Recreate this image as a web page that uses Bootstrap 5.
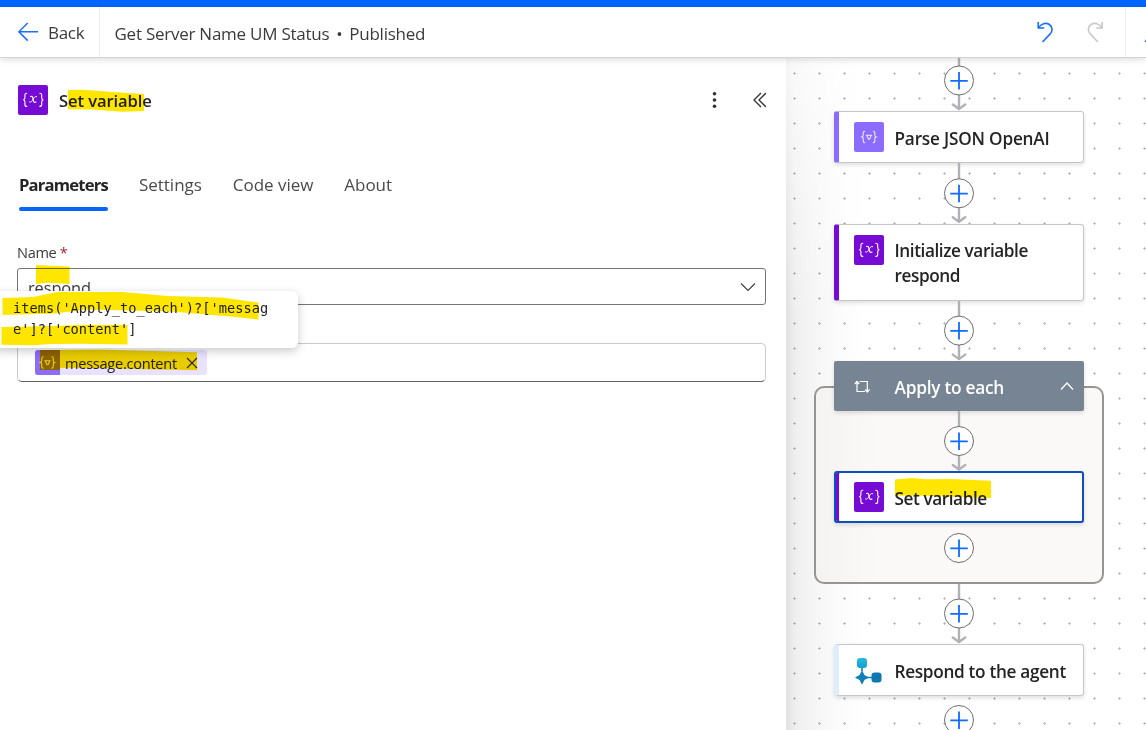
<!DOCTYPE html>
<html lang="en">
<head>
<meta charset="utf-8">
<title>Get Server Name UM Status</title>
<link href="https://cdn.jsdelivr.net/npm/bootstrap@5.3.0/dist/css/bootstrap.min.css" rel="stylesheet">
<style>
:root{--blue:#0066ff;--ink:#242424;--violet:#770bd6;--lilac:#8c6cff}
body{font-family:"Open Sans","Noto Sans",sans-serif;color:var(--ink);height:730px;overflow:hidden;background:#fff;line-height:1.36}
svg{display:block;flex:none}
.accent{height:7px;background:var(--blue)}
.topbar{height:51px;border-bottom:1px solid #d4d4d4;box-shadow:0 2px 6px rgba(0,0,0,.13);z-index:5;color:#3b3a39;font-size:17px}
.back{width:100px;border-right:1px solid #ededed;padding-left:18px;gap:10px}
.back span{font-size:17px;letter-spacing:-.3px;padding-top:1px}
.flowname{padding:3px 0 0 14.5px;font-size:17px;letter-spacing:-.25px}
.flowname i{font-style:normal;width:20px;text-align:center}
.tools{width:21px;border-left:1px solid #ededed}
.panel{width:786px;z-index:2}
.panel-head{padding:27px 20px 0 18px;gap:11px}
.panel-head h1{font-size:16.6px;font-weight:600;margin:0;padding-top:2px;letter-spacing:-.1px}
.tile{width:30px;height:30px;border-radius:2px;background:var(--violet);flex:none}
.tile.json{background:var(--lilac)}
.tabs{padding:58px 0 0 19px;gap:31px;font-size:17px;letter-spacing:-.03px;color:#4a4a4a}
.tabs a{color:inherit;text-decoration:none;height:38px;white-space:nowrap;position:relative}
.tabs .on{font-weight:700;color:var(--ink);font-size:16.6px;line-height:23.5px;letter-spacing:-.8px;width:89px}
.tabs .on::after{content:"";position:absolute;left:0;right:0;bottom:0;height:4px;border-radius:2px;background:var(--blue)}
.form-area{padding:32px 20px 0 17px}
.lbl{font-size:14.6px;height:25px;color:#3b3a39;letter-spacing:-.35px}
.lbl b{color:#a4262c;font-weight:400}
.pick{height:37px;border:1px solid #757575;border-radius:3px;padding:0 9px 0 10px;font-size:16.4px;color:#3b3a39;letter-spacing:-.1px}
.pick span{padding-top:4px}
.expr{height:39px;margin-top:38px;border:1px solid #c9c9c9;border-bottom-color:#616161;border-radius:5px;padding-left:17px}
.token{height:25px;width:172px;background:#e8e2ff;border-radius:3px;overflow:hidden;font-size:14.6px;letter-spacing:-.27px}
.token i{width:25px;height:25px;background:var(--lilac)}
.tip{left:-8px;top:233px;width:306px;height:57px;background:#fff;border-radius:6px;box-shadow:0 3px 10px rgba(0,0,0,.22);padding:7px 0 0 21px;font:13.68px/21px "DejaVu Sans Mono",monospace;white-space:pre}
.marker{left:0;top:0;mix-blend-mode:multiply;pointer-events:none;fill:#ffe600}
.canvas{overflow:hidden;background:radial-gradient(circle at 12.5px 12.5px,#b4b4b8 0,#b4b4b8 .9px,transparent 1.3px) -4px 3px/25px 25px,#fff;padding-left:28px}
.canvas::before{content:"";position:absolute;left:0;top:0;width:80px;bottom:0;background:linear-gradient(90deg,rgba(0,0,0,.12) 0,rgba(0,0,0,.065) 8px,rgba(0,0,0,.045) 24px,rgba(0,0,0,.015) 50px,rgba(0,0,0,0) 80px);-webkit-mask-image:linear-gradient(180deg,rgba(0,0,0,.3) 0,#000 260px)}
.chain{width:290px;margin-top:-8px}
.step{width:250px;border:1px solid #c8c6c4;border-left:5px solid var(--c);border-radius:3px;background:#fff;box-shadow:0 2px 4px rgba(0,0,0,.13);gap:10.5px;padding:10px 0 0 15px;font-weight:600;font-size:17.2px;letter-spacing:-.3px;line-height:25px;height:52px;flex:none}
.step span{padding-top:4px;white-space:nowrap}
.step.wide-title{letter-spacing:-.2px}
.step.tall{height:77px;padding-top:10px}.step.tall span{padding-top:3px}
.step.tall,.step.sel{letter-spacing:-.42px}
.step.sel{border:2px solid #0f4fbd;box-shadow:inset 3px 0 var(--c),0 2px 4px rgba(0,0,0,.13);padding:9px 0 0 18px}
.loop{width:290px;height:223px;flex:none}
.loop::before{content:"";position:absolute;left:0;right:0;top:25px;bottom:0;border:2px solid #979593;border-radius:10px;background:linear-gradient(90deg,#f4f3f2,#faf9f8 60px)}
.loop>*{position:relative}
.loophead{width:250px;height:50px;background:#768494;color:#fff;border-radius:2px;font-weight:600;font-size:17.3px;letter-spacing:-.27px;padding:2px 10px 0 20px;box-shadow:0 2px 4px rgba(0,0,0,.13);flex:none}
</style>
</head>
<body class="d-flex flex-column">
<svg width="0" height="0" class="position-absolute"><defs>
<g id="plus"><circle cx="15" cy="15" r="14.5" fill="#fff" stroke="#6e6e6e"/><path d="M15 6.5v17.5M6.3 15.3h17.5" stroke="#0f6cff" stroke-width="1.8"/></g>
<g id="conn"><path d="M15 0v58M8.8 54l6.2 4.5 6.2-4.5" fill="none" stroke="#b0b0b7" stroke-width="2.4" stroke-linecap="round" stroke-linejoin="round"/><use href="#plus" y="15"/></g>
<g id="brx" fill="none" stroke="#fff" stroke-width="1.1" stroke-linecap="round"><path d="M8.8 8.3C7 8.3 6.9 9.1 6.900 10.300v2.500c0 1.200-.5 1.800-1.600 2 1.100.2 1.600.8 1.600 2v2.600c0 1.200.1 2 1.900 2M21.800 8.300c1.800 0 1.900.8 1.900 2v2.500c0 1.200.5 1.800 1.600 2-1.100.2-1.600.8-1.600 2v2.600c0 1.200-.1 2-1.900 2"/><path d="M12.600 11.500c1.500-.8 2 .3 2.500 2.900.5 2.500 1 3.600 2.900 2.600"/><path d="M18.700 11.600c-1.900-.7-2.600 1-3.600 2.700-1 1.800-1.700 3.400-3.600 2.700" stroke-width=".9"/></g>
<g id="brj" fill="none" stroke="#eee9ff" stroke-width="1.1" stroke-linecap="round"><path d="M10.700 9.300c-1.300 0-1.500.6-1.500 1.600v2.100c0 1-.3 1.600-1.200 1.900.9.2 1.200.8 1.200 1.900v2.100c0 1 .2 1.700 1.500 1.700M19.300 9.300c1.300 0 1.500.6 1.500 1.600v2.100c0 1 .3 1.600 1.200 1.900-.9.200-1.200.8-1.200 1.900v2.100c0 1-.2 1.700-1.500 1.700M12.300 13.300h5.400M12.800 13.500l1.700 3.700h1l1.700-3.700"/></g>
</defs></svg>
<div class="accent flex-shrink-0"></div>
<header class="topbar d-flex position-relative bg-white flex-shrink-0">
  <div class="back d-flex align-items-center"><svg width="20" height="20" fill="none" stroke="#1a6fff" stroke-width="1.5"><path d="M.8 9.800H20M9.700 1L.9 9.800l8.800 8.800"/></svg><span>Back</span></div>
  <div class="flowname d-flex align-items-center">Get Server Name UM Status<i>•</i>Published</div>
  <div class="d-flex ms-auto" style="padding-top:14.5px">
    <svg width="88" height="30" fill="none" stroke-width="1.6"><path d="M1.200 0v6h6M1.500 5.800C4 1.500 9 .2 12.400 2.500c3.300 2.300 3.400 6.500.8 9.400L5.500 20" stroke="#1a6fff"/><path d="M65.200 0v6h-6M64.900 5.800C62.500 1.500 57.500 .2 54 2.500c-3.300 2.300-3.400 6.500-.8 9.400l7.700 8.100" stroke="#c8c8c8"/></svg>
  </div>
  <div class="tools"><svg width="20" height="50"><path d="M18.500 35l2-4v4z" fill="#1a6fff"/></svg></div>
</header>
<div class="d-flex flex-grow-1" style="min-height:0">
  <main class="panel position-relative bg-white flex-shrink-0">
    <div class="panel-head d-flex align-items-center">
      <div class="tile"><svg width="30" height="30"><use href="#brx"/></svg></div>
      <h1>Set variable</h1>
      <svg class="ms-auto" width="56" height="20"><g fill="#323130"><circle cx="4.500" cy="3.800" r="1.800"/><circle cx="4.500" cy="10" r="1.800"/><circle cx="4.500" cy="16.200" r="1.800"/></g><path d="M51 3l-7 7 7 7M56 3l-7 7 7 7" fill="none" stroke="#323130" stroke-width="1.300"/></svg>
    </div>
    <nav class="tabs d-flex"><a class="on" href="#">Parameters</a><a href="#">Settings</a><a href="#">Code view</a><a href="#">About</a></nav>
    <div class="form-area">
      <div class="lbl">Name <b>*</b></div>
      <div class="pick d-flex align-items-center justify-content-between"><span>respond</span><svg width="16" height="10" fill="none" stroke="#424242" stroke-width="1.200"><path d="M1 1.500l7 7 7-7"/></svg></div>
      <div class="expr d-flex align-items-center"><div class="token d-flex align-items-center"><i><svg width="25" height="25"><use href="#brj" x="-2.500" y="-2.500"/></svg></i><span style="margin-left:5px;padding-top:2px">message.content</span><svg width="12" height="12" style="margin-left:9px" fill="none" stroke="#323130" stroke-width="1.200"><path d="M1 1l10 10M11 1L1 11"/></svg></div></div>
    </div>
    <div class="tip position-absolute">items('Apply_to_each')?['messag
e']?['content']</div>
    <svg class="marker position-absolute" width="786" height="340" viewBox="0 58 786 340">
      <path d="M68 90l15-.3 30 2.300 31 2v17l-22 .8-30-2.300-24-.3z"/>
      <path d="M36 265l15 .8 18.500.7v17.500l-22-1.200L36 284z"/>
      <path d="M2.500 298l30-1 25-5h65l45 4 55 1.500 36 5v17l-28-3-60-5-85-2-30 4-53 1.500z"/>
      <path d="M1.500 327l50-1 30-1h46v19.500l-50-.8-25 .3-20 1.200-31-.5z"/>
      <path d="M40 350l60-.5 97 2.800v18l-52-1-45-1.300-60-.2z"/>
      <path d="M40 350h20v20H40z"/>
    </svg>
  </main>
  <section class="canvas position-relative flex-grow-1">
    <div class="chain d-flex flex-column align-items-center position-relative">
      <svg width="30" height="61"><use href="#conn" y=".5"/></svg>
      <div class="step wide-title d-flex align-items-start" style="--c:#8c6cff"><div class="tile json"><svg width="30" height="30"><use href="#brj"/></svg></div><span>Parse JSON OpenAI</span></div>
      <svg width="30" height="61"><use href="#conn" y=".3"/></svg>
      <div class="step tall d-flex align-items-start" style="--c:#770bd6"><div class="tile"><svg width="30" height="30"><use href="#brx"/></svg></div><span>Initialize variable<br>respond</span></div>
      <svg width="30" height="60"><use href="#conn" y="-.4"/></svg>
      <div class="loop position-relative d-flex flex-column align-items-center">
        <div class="loophead d-flex align-items-center"><svg width="16" height="14" fill="none" stroke="#fff" stroke-width="1.200"><path d="M3 12V1.500M.8 4L3 1.500 5.200 4M5.500 1.500h7.800V12M11.100 9.500l2.200 2.500 2.200-2.500M3 11.500h8"/></svg><span style="margin-left:24.500px;padding-top:1.500px">Apply to each</span><svg class="ms-auto" width="14" height="10" fill="none" stroke="#fff" stroke-width="1.300"><path d="M1 7.500l6-6.500 6 6.500"/></svg></div>
        <svg width="30" height="60"><use href="#conn"/></svg>
        <div class="step sel d-flex align-items-start" style="--c:#770bd6"><div class="tile"><svg width="30" height="30"><use href="#brx"/></svg></div><span>Set variable</span></div>
        <svg width="30" height="30" style="margin-top:10px"><use href="#plus"/></svg>
        <svg class="marker position-absolute" style="left:80px;top:116px" width="100" height="22"><path d="M1 2.500L18 1l14 1.300 25-.3 40 1.800V21l-25-.8-40-1.500L1 18.500z"/></svg>
      </div>
      <svg width="30" height="60"><use href="#conn" y="-.5"/></svg>
      <div class="step d-flex align-items-start" style="--c:#dfecf9"><svg width="30" height="30"><defs><linearGradient id="g" x1="0" y1="0" x2="0" y2="1"><stop offset="0" stop-color="#27b9e6"/><stop offset="1" stop-color="#15a0cd"/></linearGradient></defs><path d="M8 10v6M12 22.500h7" stroke="#1583b8" stroke-width="1.700"/><rect x="3" y="3" width="10" height="10" rx="3" fill="url(#g)"/><rect x="17.500" y="17.500" width="10" height="10" rx="3" fill="#0d78ae"/><path d="M8 16.500l2 4 4 2-4 2-2 4-2-4-4-2 4-2z" fill="#1180b5" stroke="#1180b5" stroke-width="1.200" stroke-linejoin="round"/></svg><span>Respond to the agent</span></div>
      <svg width="30" height="30" style="margin-top:9px"><use href="#plus"/></svg>
    </div>
  </section>
</div>
<script src="https://cdn.jsdelivr.net/npm/bootstrap@5.3.0/dist/js/bootstrap.bundle.min.js"></script>
</body>
</html>
